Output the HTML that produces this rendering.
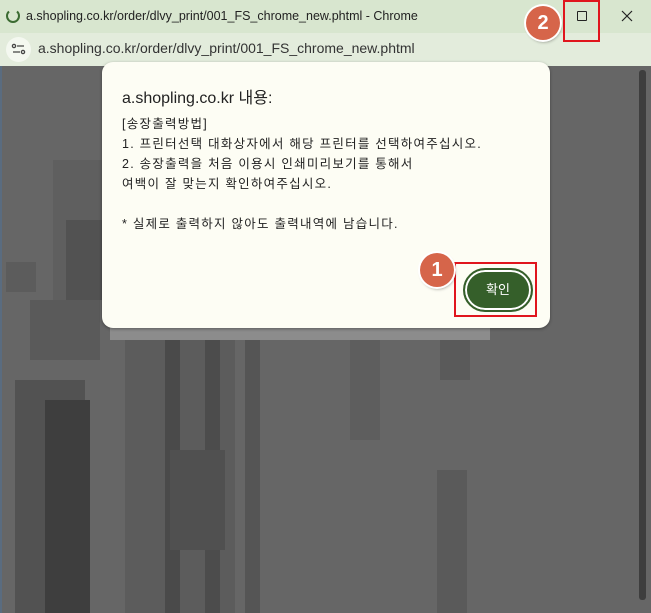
<!DOCTYPE html>
<html><head><meta charset="utf-8"><style>
*{margin:0;padding:0;box-sizing:border-box}
body{width:651px;height:613px;overflow:hidden;background:#666;font-family:"Liberation Sans","Noto Sans CJK KR",sans-serif;position:relative}
.title{position:absolute;left:0;top:0;width:651px;height:33px;background:#d8e6cf;}
.addr{position:absolute;left:0;top:33px;width:651px;height:33px;background:#e3ecdc;}
.t{position:absolute;font-size:12px;color:#222;white-space:nowrap}
.b{position:absolute}
.dlg{position:absolute;left:102px;top:62px;width:448px;height:266px;background:#fdfdf4;border-radius:11px;box-shadow:0 1px 3px rgba(0,0,0,.35)}
.dlg .h{position:absolute;left:20px;top:22px;font-size:16px;color:#222}
.dlg .m{position:absolute;left:20px;top:52px;font-size:12.5px;letter-spacing:1.25px;line-height:20px;color:#222;white-space:nowrap}
.btn{position:absolute;left:463px;top:268px;width:70px;height:44px;border-radius:22px;background:#355f2a;border:2px solid #355f2a;box-shadow:inset 0 0 0 2px #fff;color:#fff;font-size:13px;text-align:center;line-height:40px}
.red{position:absolute;border:2px solid #e0151d}
.badge{position:absolute;width:34px;height:34px;border-radius:50%;background:#d6654a;color:#fff;font-weight:bold;font-size:20px;text-align:center;line-height:34px;box-shadow:0 0 0 2px #fff,1px 2px 3px rgba(0,0,0,.4)}
</style></head><body>
<div class="title"></div>
<div class="addr"></div>
<svg class="b" style="left:5px;top:8px" width="16" height="16" viewBox="0 0 16 16"><path d="M4 3.5A6 6 0 1 0 12 3.5" fill="none" stroke="#3b6b32" stroke-width="2"/></svg>
<div class="t" style="left:26px;top:9px;font-size:12.5px">a.shopling.co.kr/order/dlvy_print/001_FS_chrome_new.phtml - Chrome</div>
<div class="b" style="left:6px;top:37px;width:25px;height:25px;border-radius:50%;background:#f4f8f0"></div>
<svg class="b" style="left:11px;top:42px" width="15" height="15" viewBox="0 0 15 15" fill="none" stroke="#444" stroke-width="1.3"><circle cx="3" cy="4" r="1.6"/><path d="M6 4h7M2 10h7"/><circle cx="12" cy="10" r="1.6"/></svg>
<div class="t" style="left:38px;top:40px;font-size:14px;color:#333">a.shopling.co.kr/order/dlvy_print/001_FS_chrome_new.phtml</div>
<div class="b" style="left:577px;top:11px;width:10px;height:10px;border:1.2px solid #222;border-radius:1px"></div>
<svg class="b" style="left:621px;top:10px" width="12" height="12" viewBox="0 0 12 12"><path d="M1 1L11 11M11 1L1 11" stroke="#222" stroke-width="1.2"/></svg>
<div class="red" style="left:563px;top:0;width:37px;height:42px"></div>
<div class="badge" style="left:526px;top:6px">2</div>

<div class="b" style="left:0;top:66px;width:2px;height:547px;background:#5a6c80"></div>
<div class="b" style="left:53px;top:160px;width:50px;height:140px;background:#5f5f5f"></div>
<div class="b" style="left:66px;top:220px;width:36px;height:80px;background:#525252"></div>
<div class="b" style="left:6px;top:262px;width:30px;height:30px;background:#5c5c5c"></div>
<div class="b" style="left:30px;top:300px;width:70px;height:60px;background:#5a5a5a"></div>
<div class="b" style="left:15px;top:380px;width:70px;height:233px;background:#525252"></div>
<div class="b" style="left:45px;top:400px;width:45px;height:213px;background:#3e3e3e"></div>
<div class="b" style="left:125px;top:340px;width:110px;height:273px;background:#5c5c5c"></div>
<div class="b" style="left:165px;top:340px;width:15px;height:273px;background:#4a4a4a"></div>
<div class="b" style="left:205px;top:340px;width:15px;height:273px;background:#4c4c4c"></div>
<div class="b" style="left:170px;top:450px;width:55px;height:100px;background:#505050"></div>
<div class="b" style="left:245px;top:340px;width:15px;height:273px;background:#555"></div>
<div class="b" style="left:350px;top:340px;width:30px;height:100px;background:#5e5e5e"></div>
<div class="b" style="left:440px;top:340px;width:30px;height:40px;background:#5a5a5a"></div>
<div class="b" style="left:437px;top:470px;width:30px;height:143px;background:#5a5a5a"></div>
<div class="b" style="left:110px;top:322px;width:380px;height:18px;background:#8c8c8c"></div>
<div class="b" style="left:639px;top:70px;width:7px;height:530px;background:#3e3e3e;border-radius:3px"></div>

<div class="dlg">
<div class="h">a.shopling.co.kr 내용:</div>
<div class="m">[송장출력방법]<br>1. 프린터선택 대화상자에서 해당 프린터를 선택하여주십시오.<br>2. 송장출력을 처음 이용시 인쇄미리보기를 통해서<br>여백이 잘 맞는지 확인하여주십시오.<br><br>* 실제로 출력하지 않아도 출력내역에 남습니다.</div>
</div>
<div class="btn">확인</div>
<div class="red" style="left:454px;top:262px;width:83px;height:55px"></div>
<div class="badge" style="left:420px;top:253px">1</div>
</body></html>
